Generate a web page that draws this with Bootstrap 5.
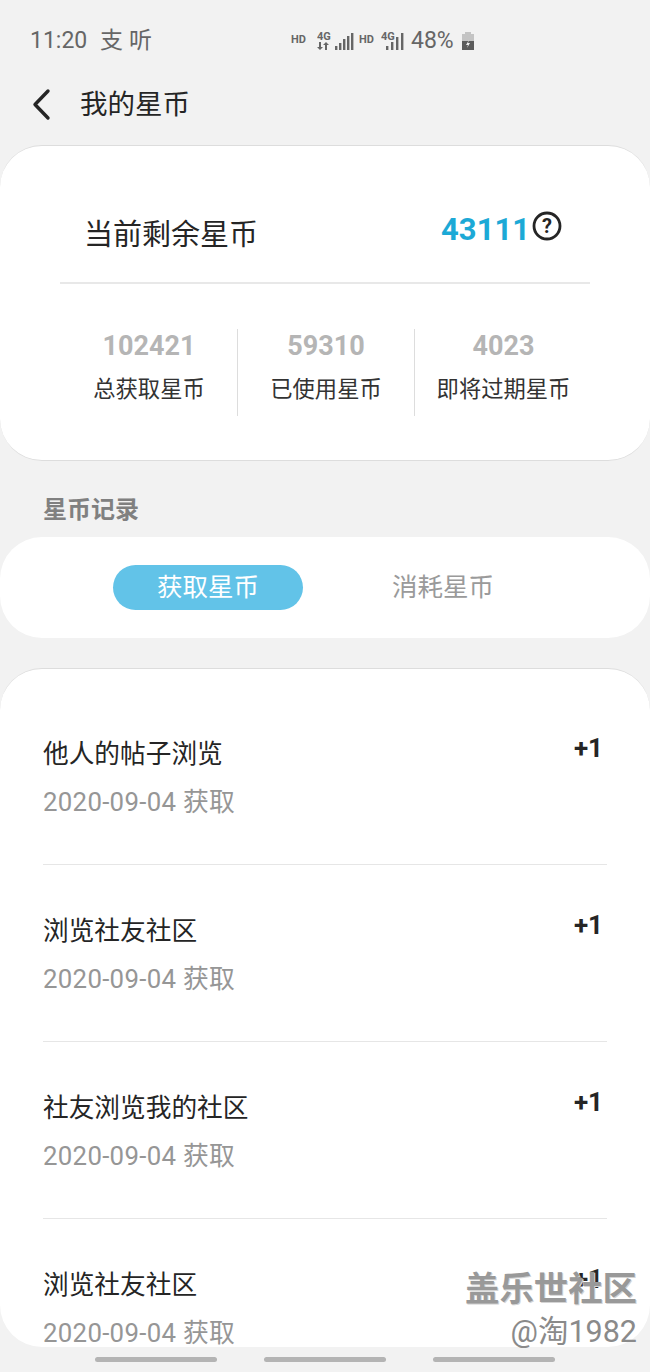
<!DOCTYPE html>
<html lang="zh">
<head>
  <meta charset="UTF-8" />
  <meta name="viewport" content="width=device-width, initial-scale=1.0"/>
  <title>我的星币</title>
  <link href="https://cdn.jsdelivr.net/npm/bootstrap@5.3.0/dist/css/bootstrap.min.css" rel="stylesheet">
  <style>
    html, body { height: 1372px; overflow: hidden; }
    body {
      background-color: #f2f2f2;
      font-family: Roboto, "Noto Sans CJK SC", sans-serif;
      color: #252525;
      position: relative;
    }
    .status-bar { height: 78px; padding: 28px 0 0 30px; color: #666; }
    .status-time { font-size: 23px; line-height: 25px; width: 62px; }
    .status-cn { font-size: 23px; line-height: 25px; margin-left: 8px; width: 60px; letter-spacing: 6px; }
    .status-icons { margin-left: 131px; gap: 4px; }
    .status-hd { font-size: 11px; font-weight: 700; width: 22px; }
    .status-hd-tight { width: 18px; }
    .status-pct { font-size: 23px; line-height: 25px; margin: 0 3px 0 2px; }
    .top-title { height: 67px; padding-left: 30px; gap: 26px; }
    .top-title h1 { font-size: 27.500px; font-weight: 400; margin: 0; line-height: 54px; }
    .panel-white { background: #fff; border-top: 1px solid #ddd; border-bottom: 1px solid #ddd; }
    .summary-panel { height: 316px; border-radius: 42px; padding: 0 60px; }
    .summary-head { height: 138px; border-bottom: 2px solid #e8e8e8; padding: 0 28px 0 24px; }
    .summary-label { font-size: 29px; line-height: 40px; padding-top: 69px; }
    .summary-value { font-size: 31px; font-weight: 700; color: #1ca9d6; line-height: 40px; padding-top: 64px; }
    .help-icon { margin: 65px 0 0 2px; }
    .summary-stats { padding-top: 45px; margin: 0 -1px 0 1px; }
    .stat-cell { width: 177px; height: 87px; text-align: center; border-right: 1px solid #ddd; flex: none; padding-top: 1px; }
    .stat-cell:last-child { border-right: 0; }
    .stat-num { font-size: 27px; font-weight: 700; color: #b5b5b5; line-height: 33px; }
    .stat-text { font-size: 22.300px; line-height: 30px; margin-top: 11px; color: #333; white-space: nowrap; }
    .section-title { height: 76px; padding: 33px 0 0 43px; font-size: 24px; font-weight: 700; line-height: 32px; color: #808080; }
    .tab-panel { height: 101px; background: #fff; border-radius: 42px; padding: 28px 0 0 113px; }
    .tab-on { width: 190px; height: 45px; border-radius: 23px; background: #62c3e8; color: #fff; font-size: 25.500px; line-height: 44px; text-align: center; }
    .tab-off { font-size: 25.500px; line-height: 45px; color: #9a9a9a; margin-left: 89px; }
    .list-panel { margin-top: 30px; height: 679px; border-radius: 42px; padding: 19px 43px 0; overflow: hidden; border-bottom: 0; }
    .log-row { height: 177px; padding-top: 46px; border-bottom: 1px solid #e6e6e6; }
    .log-row:last-child { border-bottom: 0; }
    .log-name { font-size: 25.700px; line-height: 40px; }
    .log-date { font-size: 25.800px; line-height: 36px; color: #969696; margin-top: 10px; letter-spacing: .3px; }
    .log-plus { font-size: 26px; font-weight: 700; line-height: 30px; margin: -1px 4px 0 0; }
    .nav-strip { gap: 47px; margin: 10px 0 0 95px; }
    .nav-pill { width: 122px; height: 5px; border-radius: 3px; background: #b4b4b4; }
    .watermark { position: absolute; right: 13px; top: 1269px; text-align: right; pointer-events: none; }
    .wm-big { font-size: 34.400px; font-weight: 700; line-height: 40px; color: #999; text-shadow: 1px 1px 0 #d4d4d4; }
    .wm-small { font-size: 30.500px; line-height: 46px; color: #8a8a8a; }
  </style>
</head>
<body>
  <div class="status-bar d-flex align-items-start">
    <span class="status-time">11:20</span>
    <span class="status-cn">支听</span>
    <div class="status-icons d-flex align-items-center">
      <span class="status-hd">HD</span>
      <svg width="38" height="20" viewBox="0 0 38 20"><g fill="#666"><text x="0" y="9" font-family="Roboto" font-size="11" font-weight="700">4G</text><path d="M2 11h2v5h2l-3 3-3-3h2zM10 19H8v-5H6l3-3 3 3h-2z"/><rect x="18" y="15" width="2.400" height="4"/><rect x="22" y="12" width="2.400" height="7"/><rect x="26" y="8" width="2.400" height="11"/><rect x="30" y="5" width="2.400" height="14"/><rect x="34" y="2" width="2.400" height="17"/></g></svg>
      <span class="status-hd status-hd-tight">HD</span>
      <svg width="24" height="20" viewBox="0 0 24 20"><g fill="#666"><text x="0" y="9" font-family="Roboto" font-size="11" font-weight="700">4G</text><rect x="5" y="15" width="2.400" height="4"/><rect x="10" y="11" width="2.400" height="8"/><rect x="15" y="6" width="2.400" height="13"/><rect x="20" y="2" width="2.400" height="17"/></g></svg>
      <span class="status-pct">48%</span>
      <svg width="14" height="20" viewBox="0 0 14 20"><path d="M4 1h6v2h3v16H1V3h3z" fill="#c4c4c4"/><path d="M1 10h12v9H1z" fill="#5c5c5c"/><path d="M8 9l-3 5h2l-1 3 3-5H7z" fill="#eee"/></svg>
    </div>
  </div>

  <div class="top-title d-flex align-items-start">
    <svg width="24" height="36" viewBox="0 0 24 36" class="mt-2"><path d="M18 5L5 18.500 18 32" fill="none" stroke="#252525" stroke-width="3.400" stroke-linecap="round" stroke-linejoin="round"/></svg>
    <h1>我的星币</h1>
  </div>

  <div class="panel-white summary-panel">
    <div class="summary-head d-flex justify-content-between align-items-start">
      <span class="summary-label">当前剩余星币</span>
      <span class="d-flex align-items-start">
        <span class="summary-value">43111</span>
        <svg class="help-icon" width="30" height="30" viewBox="0 0 30 30"><circle cx="15" cy="15" r="13" fill="none" stroke="#252525" stroke-width="2.800"/><text x="15" y="22" text-anchor="middle" font-family="Roboto" font-size="20" font-weight="700" fill="#252525">?</text></svg>
      </span>
    </div>
    <div class="summary-stats d-flex">
      <div class="stat-cell"><div class="stat-num">102421</div><div class="stat-text">总获取星币</div></div>
      <div class="stat-cell"><div class="stat-num">59310</div><div class="stat-text">已使用星币</div></div>
      <div class="stat-cell"><div class="stat-num">4023</div><div class="stat-text">即将过期星币</div></div>
    </div>
  </div>

  <div class="section-title">星币记录</div>

  <div class="tab-panel d-flex align-items-start">
    <div class="tab-on">获取星币</div>
    <div class="tab-off">消耗星币</div>
  </div>

  <div class="panel-white list-panel">
    <div class="log-row d-flex justify-content-between align-items-start">
      <div><div class="log-name">他人的帖子浏览</div><div class="log-date">2020-09-04 获取</div></div>
      <div class="log-plus">+1</div>
    </div>
    <div class="log-row d-flex justify-content-between align-items-start">
      <div><div class="log-name">浏览社友社区</div><div class="log-date">2020-09-04 获取</div></div>
      <div class="log-plus">+1</div>
    </div>
    <div class="log-row d-flex justify-content-between align-items-start">
      <div><div class="log-name">社友浏览我的社区</div><div class="log-date">2020-09-04 获取</div></div>
      <div class="log-plus">+1</div>
    </div>
    <div class="log-row d-flex justify-content-between align-items-start">
      <div><div class="log-name">浏览社友社区</div><div class="log-date">2020-09-04 获取</div></div>
      <div class="log-plus">+1</div>
    </div>
  </div>

  <div class="nav-strip d-flex">
    <div class="nav-pill"></div>
    <div class="nav-pill"></div>
    <div class="nav-pill"></div>
  </div>

  <div class="watermark">
    <div class="wm-big">盖乐世社区</div>
    <div class="wm-small">@淘1982</div>
  </div>

  <script src="https://cdn.jsdelivr.net/npm/bootstrap@5.3.0/dist/js/bootstrap.bundle.min.js"></script>
</body>
</html>
